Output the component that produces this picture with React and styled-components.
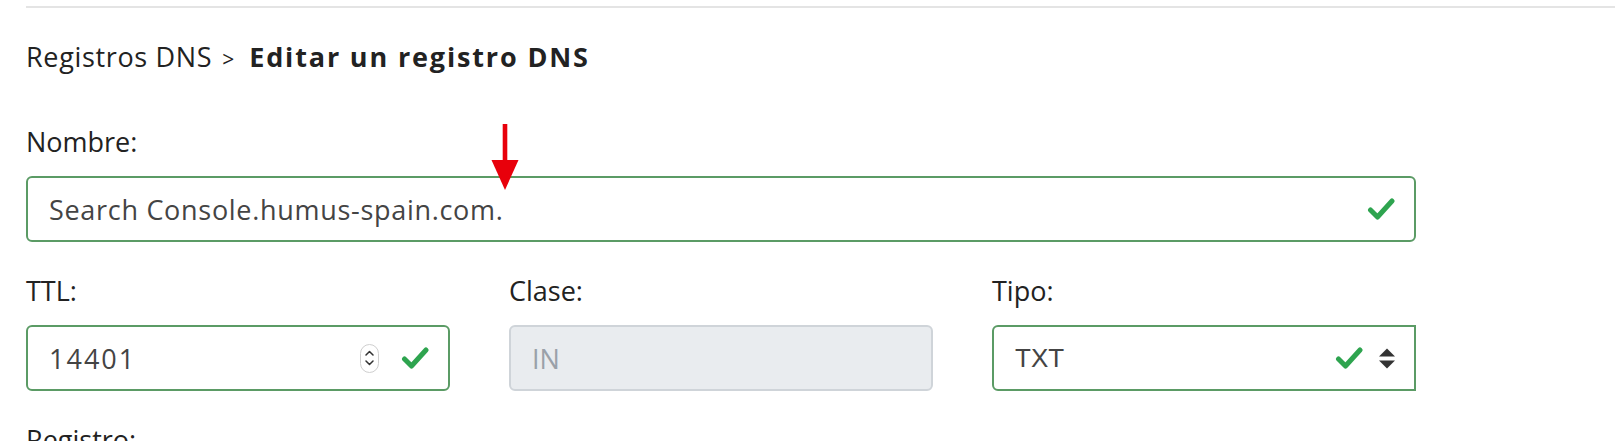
import React from "react";
import styled, { createGlobalStyle } from "styled-components";

const Global = createGlobalStyle`
  html, body { margin: 0; padding: 0; background: #fff; }
  body { font-family: "Open Sans", "Noto Sans", sans-serif; color: #222; }
  * { box-sizing: border-box; }
`;

const Page = styled.div`
  position: relative;
  padding: 6px 0 0 26px;
  width: 1615px;
  height: 441px;
  overflow: hidden;
`;

const TopRule = styled.div`
  height: 2px;
  background: #e4e4e4;
`;

const Breadcrumb = styled.div`
  margin-top: 30px;
  font-size: 27px;
  line-height: 38px;
  color: #222;
  white-space: nowrap;
`;

const Crumb = styled.span`
  font-weight: 400;
  letter-spacing: 0.65px;
`;

const Sep = styled.span`
  margin: 0 15px 0 10px;
  font-size: 21px;
`;

const Current = styled.span`
  font-weight: 700;
  letter-spacing: 1.85px;
`;

const Form = styled.div`
  margin-top: 45px;
  width: 1390px;
`;

const Group = styled.div`
  margin-bottom: 30px;
`;

const Row = styled.div`
  display: grid;
  grid-template-columns: repeat(3, minmax(0, 1fr));
  column-gap: 59px;
`;

const Label = styled.label`
  display: block;
  font-size: 27px;
  line-height: 38px;
  margin-bottom: 15px;
  color: #222;
`;

const Field = styled.div`
  display: flex;
  align-items: center;
  height: 66px;
  padding: 0 18px 0 21px;
  border: 2px solid ${(p) => (p.$disabled ? "#cfd4d9" : "#5b9b65")};
  border-radius: ${(p) => (p.$squareRight ? "6px 0 0 6px" : "6px")};
  background: ${(p) => (p.$disabled ? "#e9ecef" : "#fff")};
  gap: 14px;
`;

const Value = styled.input`
  flex: 1;
  min-width: 0;
  border: 0;
  outline: 0;
  background: transparent;
  padding: 0;
  font-family: ${(p) =>
    p.$system ? '"Liberation Sans", Arial, sans-serif' : '"Open Sans", "Noto Sans", sans-serif'};
  font-size: ${(p) => (p.$system ? "26px" : "27px")};
  letter-spacing: ${(p) => p.$spacing || "0px"};
  color: ${(p) => (p.disabled ? "#9aa1a9" : "#444")};
  -webkit-text-fill-color: ${(p) => (p.disabled ? "#9aa1a9" : "#444")};
`;

const Spinner = styled.span`
  display: flex;
  flex-direction: column;
  align-items: center;
  justify-content: center;
  width: 19px;
  height: 29px;
  margin-right: 8px;
  border: 1px solid #cfcfcf;
  border-radius: 10px;
  gap: 4px;
`;

const Arrow = styled.svg`
  position: absolute;
  left: 491px;
  top: 124px;
`;

const Check = () => (
  <svg width="29" height="24" viewBox="0 0 29 24" aria-hidden="true">
    <path
      d="M3.5 13 L10.5 20 L25 4"
      fill="none"
      stroke="#2ea44f"
      strokeWidth="5"
      strokeLinecap="round"
      strokeLinejoin="round"
    />
  </svg>
);

const Chevron = ({ up }) => (
  <svg width="9" height="6" viewBox="0 0 9 6" aria-hidden="true">
    <path
      d={up ? "M1 5 L4.5 1.5 L8 5" : "M1 1 L4.5 4.5 L8 1"}
      fill="none"
      stroke="#333"
      strokeWidth="1.5"
      strokeLinecap="round"
      strokeLinejoin="round"
    />
  </svg>
);

const SortIcon = () => (
  <svg width="18" height="21" viewBox="0 0 18 21" aria-hidden="true">
    <path d="M9 0.5 L17 8.5 L1 8.5 Z" fill="#333" />
    <path d="M1 12.5 L17 12.5 L9 20.5 Z" fill="#333" />
  </svg>
);

export default function App() {
  return (
    <>
      <Global />
      <Page>
        <TopRule />
        <Breadcrumb>
          <Crumb>Registros DNS</Crumb>
          <Sep>&gt;</Sep>
          <Current>Editar un registro DNS</Current>
        </Breadcrumb>
        <Form>
          <Group>
            <Label>Nombre:</Label>
            <Field>
              <Value $spacing="0.7px" readOnly value="Search Console.humus-spain.com." />
              <Check />
            </Field>
          </Group>
          <Row>
            <Group>
              <Label>TTL:</Label>
              <Field>
                <Value $spacing="2px" readOnly value="14401" />
                <Spinner>
                  <Chevron up />
                  <Chevron />
                </Spinner>
                <Check />
              </Field>
            </Group>
            <Group>
              <Label>Clase:</Label>
              <Field $disabled>
                <Value disabled value="IN" readOnly />
              </Field>
            </Group>
            <Group>
              <Label>Tipo:</Label>
              <Field $squareRight>
                <Value $system readOnly value="TXT" />
                <Check />
                <SortIcon />
              </Field>
            </Group>
          </Row>
          <Group>
            <Label>Registro:</Label>
          </Group>
        </Form>
        <Arrow width="28" height="66" viewBox="0 0 28 66" aria-hidden="true">
          <rect x="11.7" y="0" width="4.6" height="38" fill="#e8000b" />
          <path d="M0.5 36 L27.5 36 L14 66 Z" fill="#e8000b" />
        </Arrow>
      </Page>
    </>
  );
}
